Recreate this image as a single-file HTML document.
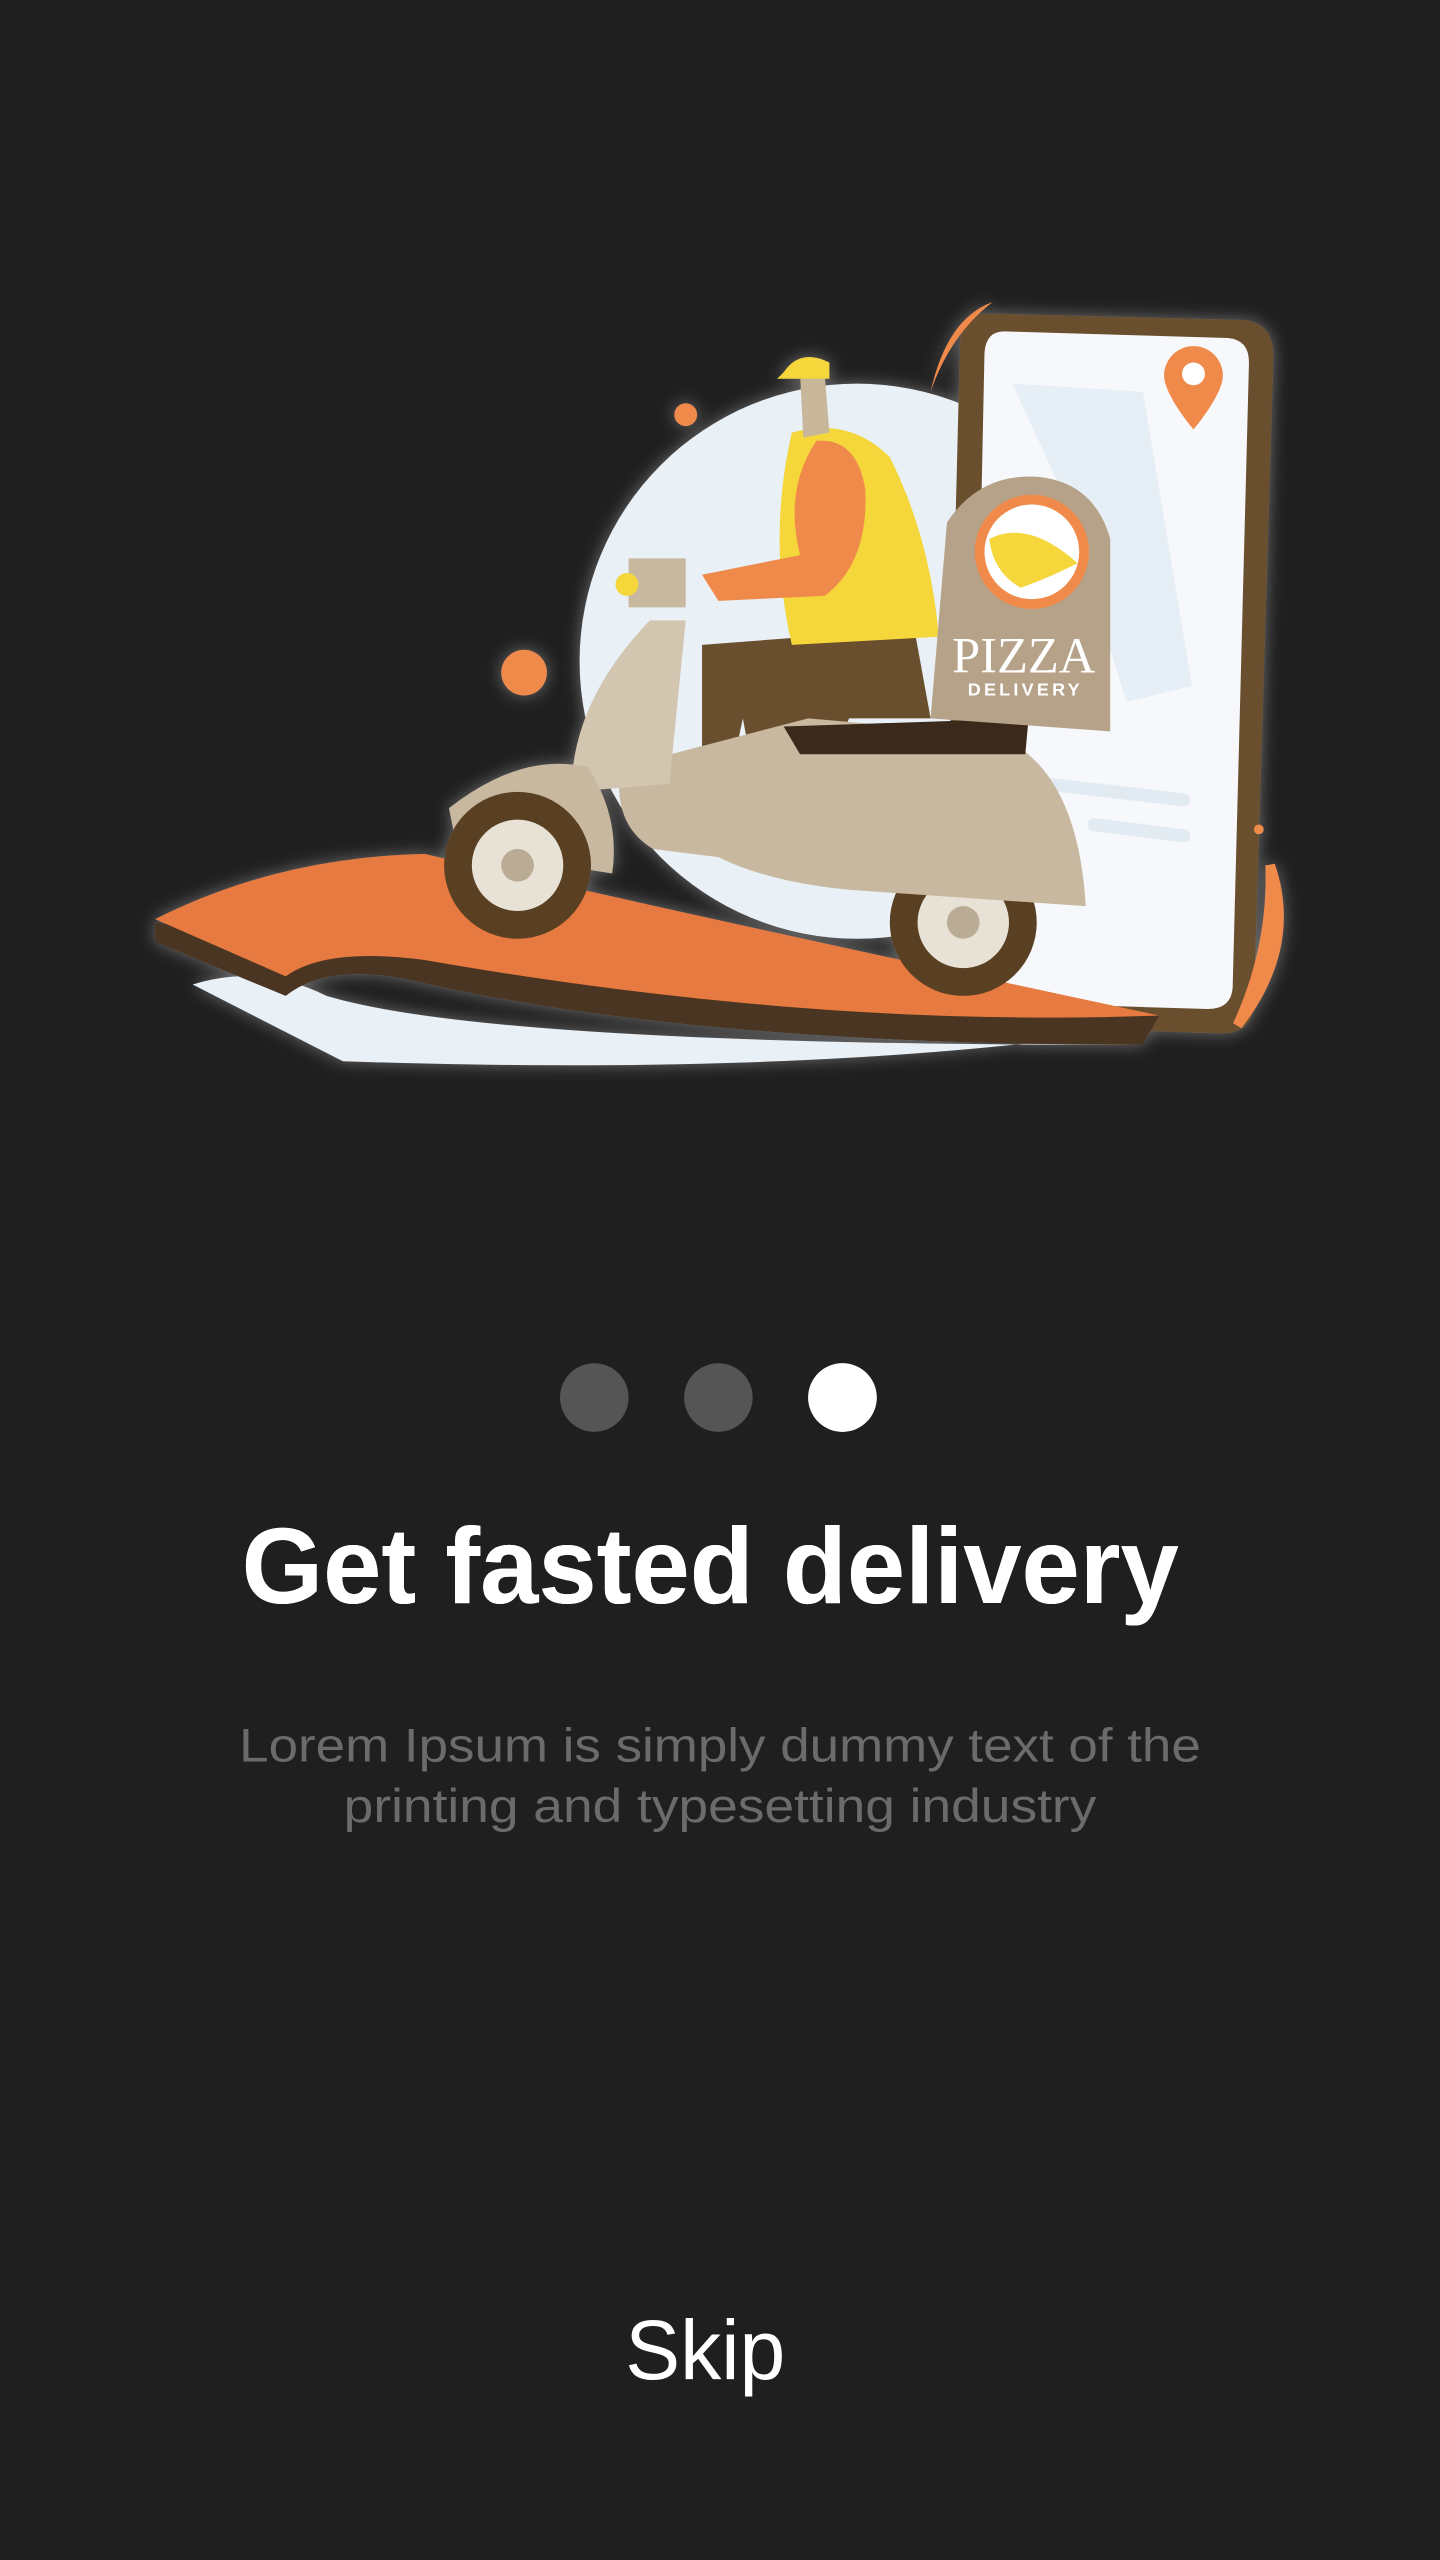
<!DOCTYPE html>
<html><head><meta charset="utf-8"><style>
html,body{margin:0;padding:0;background:#1f1f1f;width:1440px;height:2560px;overflow:hidden}
svg{display:block}
</style></head><body>
<svg width="1440" height="2560" viewBox="0 0 882 1568" xmlns="http://www.w3.org/2000/svg">
<defs>
<filter id="glow" x="-20%" y="-40%" width="140%" height="180%"><feGaussianBlur in="SourceAlpha" stdDeviation="6"/><feOffset dy="4"/><feComponentTransfer><feFuncA type="linear" slope="0.3"/></feComponentTransfer><feFlood flood-color="#fff"/><feComposite operator="in" in2="SourceAlpha"/><feMerge><feMergeNode/><feMergeNode in="SourceGraphic"/></feMerge></filter>
<filter id="g2" x="-20%" y="-20%" width="140%" height="140%"><feGaussianBlur in="SourceAlpha" stdDeviation="5" result="b"/><feComponentTransfer in="b" result="c"><feFuncA type="linear" slope="0.35"/></feComponentTransfer><feFlood flood-color="#fff"/><feComposite operator="in" in2="c"/><feMerge><feMergeNode/><feMergeNode in="SourceGraphic"/></feMerge></filter>
</defs>
<rect width="882" height="1568" fill="#1f1f1f"/>
<g filter="url(#g2)">
<circle cx="525" cy="405" r="170" fill="#e9f0f6"/>
<path d="M605 192 L762 196 Q780 198 780 218 L768 615 Q767 633 748 633 L592 628 Q578 627 578 610 L588 210 Q589 192 605 192Z" fill="#6b4f2e"/>
<path d="M615 203 L752 207 Q765 208 765 222 L755 605 Q754 618 740 618 L605 614 Q595 613 595 600 L603 216 Q604 203 615 203Z" fill="#f6f8fb"/>
<path d="M620 235 L700 240 L730 420 L690 430 L650 300Z" fill="#e6eef6"/>
<path d="M640 480 L725 490 M670 505 L725 512" stroke="#e2eaf2" stroke-width="8" stroke-linecap="round"/>
<path d="M731 212 a18 18 0 0 1 18 18 c0 12 -18 33 -18 33 c0 0 -18 -21 -18 -33 a18 18 0 0 1 18 -18z" fill="#f08a4b"/>
<circle cx="731" cy="229" r="7" fill="#fff"/>
<path d="M608 185 Q580 195 570 240 Q582 205 608 185Z" fill="#f08a4b"/>
<path d="M778 530 Q795 580 758 628 Q780 580 778 530Z" fill="#f08a4b" stroke="#f08a4b" stroke-width="6"/>
<circle cx="771" cy="508" r="3" fill="#f08a4b"/>
<path d="M118 603 Q160 590 200 610 Q300 640 690 640 L700 630 Q500 660 210 650 Z" fill="#e9f0f6"/>
<path d="M95 565 L95 577 L175 610 Q200 590 250 600 Q420 640 700 640 L710 622 Z" fill="#4a3620"/>
<path d="M95 563 Q170 525 260 523 Q420 560 710 622 Q500 630 260 588 Q200 580 175 598 Z" fill="#e67a3f"/>
<circle cx="420" cy="254" r="7" fill="#f08a4b"/>
<circle cx="321" cy="412" r="14" fill="#f08a4b"/>
<circle cx="590" cy="565" r="45" fill="#5a3f22"/>
<circle cx="590" cy="565" r="28" fill="#e8e2d6"/>
<circle cx="590" cy="565" r="10" fill="#b9ab94"/>
<path d="M430 395 L560 385 L570 440 L520 440 L490 520 L470 520 L455 440 L440 510 L430 510Z" fill="#6b4f2e"/>
<path d="M495 440 L610 450 Q660 470 665 555 L520 545 Q470 540 440 525 L400 520 Q375 505 380 470 Z" fill="#c8b89f"/>
<path d="M480 445 L630 440 L628 462 L490 462Z" fill="#3a2a1a"/>
<path d="M398 380 L420 380 L410 480 L350 485 Q350 430 398 380Z" fill="#d3c6b1"/>
<path d="M275 495 Q320 460 360 470 Q380 500 375 535 L280 520Z" fill="#c8b89f"/>
<circle cx="317" cy="530" r="45" fill="#5a3f22"/>
<circle cx="317" cy="530" r="28" fill="#e8e2d6"/>
<circle cx="317" cy="530" r="10" fill="#b9ab94"/>
<rect x="385" y="342" width="35" height="30" fill="#c8b89f"/>
<circle cx="384" cy="358" r="7" fill="#f5d63a"/>
<path d="M485 265 Q520 255 545 280 Q570 330 575 390 L485 395 Q470 330 485 265Z" fill="#f5d63a"/>
<path d="M500 270 Q525 268 530 300 Q532 345 505 365 L440 368 L430 352 L490 340 Q480 300 500 270Z" fill="#f08a4b"/>
<path d="M490 228 L505 228 L508 265 L492 268Z" fill="#c9b79c"/>
<path d="M480 228 Q490 213 508 222 L508 232 L476 232Z" fill="#f5d63a"/>
<path d="M580 320 Q600 290 635 292 Q670 295 680 330 L680 448 L570 440 Z" fill="#b5a288"/>
<circle cx="632" cy="338" r="35" fill="#f08a4b"/>
<circle cx="632" cy="338" r="29" fill="#fff"/>
<path d="M606 330 Q630 318 660 345 Q640 355 625 360 Q608 350 606 330Z" fill="#f5d63a"/>
<text x="627" y="412" font-family="Liberation Serif, serif" font-size="31" fill="#fff" text-anchor="middle">PIZZA</text>
<text x="628" y="426" font-family="Liberation Sans, sans-serif" font-size="11" font-weight="bold" fill="#fff" text-anchor="middle" letter-spacing="2">DELIVERY</text>
</g>
<circle cx="364" cy="856" r="21" fill="#555"/>
<circle cx="440" cy="856" r="21" fill="#555"/>
<circle cx="516" cy="856" r="21" fill="#fff" filter="url(#glow)"/>
<text x="435" y="982" font-family="Liberation Sans, sans-serif" font-size="66" font-weight="bold" fill="#fff" text-anchor="middle" textLength="574" lengthAdjust="spacingAndGlyphs" filter="url(#glow)">Get fasted delivery</text>
<text x="441" y="1079" font-family="Liberation Sans, sans-serif" font-size="29" fill="#6b6b6b" text-anchor="middle" textLength="589" lengthAdjust="spacingAndGlyphs">Lorem Ipsum is simply dummy text of the</text>
<text x="441" y="1116" font-family="Liberation Sans, sans-serif" font-size="29" fill="#6b6b6b" text-anchor="middle" textLength="461" lengthAdjust="spacingAndGlyphs">printing and typesetting industry</text>
<text x="432" y="1457" font-family="Liberation Sans, sans-serif" font-size="52" fill="#fff" text-anchor="middle" textLength="98" lengthAdjust="spacingAndGlyphs">Skip</text>
</svg>
</body></html>
